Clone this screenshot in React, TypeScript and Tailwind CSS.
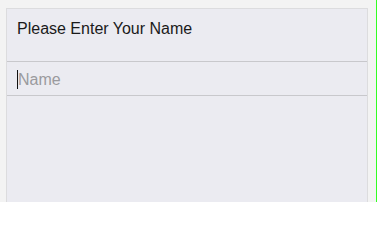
import React from "react";

export default function App() {
  return (
    <div
      className="flex h-[202px] w-[377px] overflow-hidden border-r border-[#33ff22] bg-[#f3f3f3] pl-[6px] pr-[8px] pt-[8px]"
      style={{ fontFamily: '"Liberation Sans", Arial, sans-serif' }}
    >
      <div className="flex flex-1 flex-col border-l border-r border-t border-[#dcdcde] bg-[#ebebf1]">
        <div className="h-[53px] border-b border-[#c8c8cc] pl-[10px] pt-[10px] text-[16px] leading-[19px] text-[#1a1a1a]">
          Please Enter Your Name
        </div>
        <div className="flex h-[34px] items-center border-b border-[#c8c8cc] pl-[10px] pt-[2px]">
          <span className="h-[19px] w-px bg-[#111]" />
          <span className="text-[16px] leading-[19px] text-[#9a9a9e]">Name</span>
        </div>
        <div className="flex-1" />
      </div>
    </div>
  );
}
